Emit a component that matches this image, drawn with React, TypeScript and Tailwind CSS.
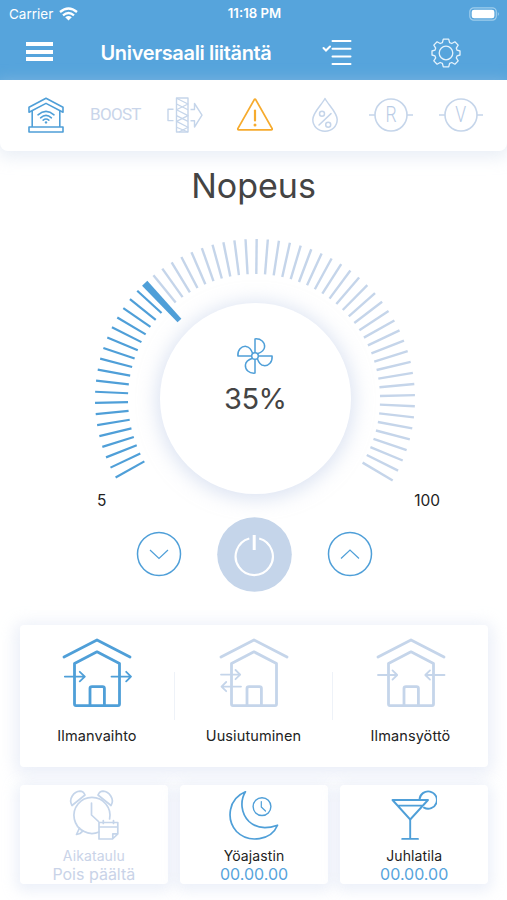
import type { ReactNode } from "react";

const BLUE = "#4f9fd8";
const PALE = "#c5d5ea";

const TICKS = 61;
const CURRENT = 19;

function polar(r: number, deg: number) {
  const a = (deg * Math.PI) / 180;
  return { x: 165 + r * Math.cos(a), y: 165 + r * Math.sin(a) };
}

function Dial() {
  return (
    <svg width="330" height="330" viewBox="0 0 330 330" className="[grid-area:1/1]">
      {Array.from({ length: TICKS }, (_, i) => {
        const deg = 150.6 + i * 4;
        const active = i < CURRENT;
        if (i === CURRENT) {
          const pts = [polar(160, deg - 1.5), polar(160, deg + 1.1), polar(109, deg + 0.9), polar(109, deg - 1.9)];
          return <polygon key={i} points={pts.map((p) => `${p.x},${p.y}`).join(" ")} fill={BLUE} />;
        }
        const a = polar(active ? 127 : 125, deg);
        const b = polar(160, deg);
        return (
          <line
            key={i}
            x1={a.x}
            y1={a.y}
            x2={b.x}
            y2={b.y}
            stroke={active ? BLUE : PALE}
            strokeWidth={active ? 2.2 : 2.4}
          />
        );
      })}
    </svg>
  );
}

function FanIcon() {
  return (
    <svg width="38" height="38" viewBox="0 0 38 38" fill="none" stroke={BLUE} strokeWidth="1.5" strokeLinejoin="round">
      <circle cx="19" cy="19" r="3.3" />
      <path d="M19 15.7V1.9C25 1.3 29 5.5 28.6 10C28.3 13.4 25 15.5 21.4 16.7" />
      <path d="M22.3 19H36.1C36.7 25 32.5 29 28 28.6C24.6 28.3 22.5 25 21.3 21.4" />
      <path d="M19 22.3V36.1C13 36.7 9 32.5 9.4 28C9.7 24.6 13 22.5 16.6 21.3" />
      <path d="M15.7 19H1.9C1.3 13 5.5 9 10 9.4C13.4 9.7 15.5 13 16.7 16.6" />
    </svg>
  );
}

function HomeWifiIcon() {
  return (
    <svg width="36" height="36" viewBox="0 0 36 36" fill="none" stroke={BLUE} strokeWidth="1.6" strokeLinejoin="round">
      <path d="M18 1.2L35 10.2V15.2L18 6.4L1 15.2V10.2Z" />
      <path d="M4.2 14V30M31.8 14V30" />
      <rect x="1" y="30" width="34" height="5" />
      <path d="M10 17.8Q18 10.8 26 17.8M12.6 20.8Q18 16 23.4 20.8M15.2 23.2Q18 20.8 20.8 23.2" strokeLinecap="round" />
      <circle cx="18" cy="25.4" r="1.2" fill={BLUE} stroke="none" />
    </svg>
  );
}

function FilterIcon() {
  return (
    <svg width="36" height="36" viewBox="0 0 36 36" fill="none" stroke={PALE} strokeWidth="1.4" strokeLinejoin="round">
      <rect x="9.5" y="1" width="11.5" height="34" />
      <path d="M9.5 1.2L21 7L9.5 12.8L21 18.6L9.5 24.4L21 30.2L12 35M9.5 7L21 12.8M9.5 18.6L21 24.4M9.5 30.2L21 35" strokeWidth="1.2" />
      <path d="M6.5 12.2H1V23.6H6.5" />
      <path d="M23.5 12.5H27.5V6.5L35 18.2L27.5 30V23.8H23.5" />
    </svg>
  );
}

function WarningIcon() {
  return (
    <svg width="38" height="36" viewBox="0 0 38 36" fill="none" stroke="#f6ab2e" strokeWidth="1.8" strokeLinejoin="round">
      <path d="M18.3 2.6Q19 1.5 19.7 2.6L36 31.4Q36.6 32.8 35.2 32.8H2.8Q1.4 32.8 2 31.4Z" />
      <path d="M19 13.5V23.5" strokeWidth="2.2" strokeLinecap="round" />
      <circle cx="19" cy="28" r="1.5" fill="#f6ab2e" stroke="none" />
    </svg>
  );
}

function HumidityIcon() {
  return (
    <svg width="28" height="36" viewBox="0 0 28 36" fill="none" stroke={PALE} strokeWidth="1.5" strokeLinejoin="round">
      <path d="M14 1.5C11 7.5 1.8 15.5 1.8 22.6C1.8 29.5 7.3 34.2 14 34.2S26.2 29.5 26.2 22.6C26.2 15.5 17 7.5 14 1.5Z" />
      <circle cx="11" cy="16.8" r="2.5" />
      <circle cx="17.2" cy="27.8" r="2.5" />
      <path d="M20 16.6L8 28" strokeLinecap="round" />
    </svg>
  );
}

function RelayIcon({ letter }: { letter: string }) {
  return (
    <div className="relative flex h-9 w-11.5 items-center justify-center">
      <svg width="46" height="36" viewBox="0 0 46 36" fill="none" stroke={PALE} strokeWidth="1.6" className="absolute inset-0">
        <circle cx="23" cy="18" r="16" />
        <path d="M1 18H7M39 18H45" />
      </svg>
      <span className="scale-x-80 font-[Roboto] text-[22px] leading-none font-light text-[#b9cce6]">{letter}</span>
    </div>
  );
}

type Flow = "through" | "recirculate" | "supply";

function HouseIcon({ flow, color }: { flow: Flow; color: string }) {
  return (
    <svg width="70" height="70" viewBox="0 0 70 70" fill="none" stroke={color} strokeWidth="2.8" strokeLinejoin="round" strokeLinecap="round">
      <path d="M2 19L35 2L68 19" />
      <path d="M35 13.8L12.5 25.4V66Q12.5 67.6 14 67.6H56Q57.5 67.6 57.5 66V25.4Z" />
      <path d="M28 67V50.5Q28 48.6 30 48.6H40.5Q42.4 48.6 42.4 50.5V67" />
      <g strokeWidth="1.8">
        {flow === "through" && <path d="M2.8 38.6H22.5M17.8 33.8L22.8 38.6L17.8 43.4M49.5 38.6H69M64.2 33.8L69 38.6L64.2 43.4" />}
        {flow === "recirculate" && <path d="M2 36.6H21M16.5 32L21.2 36.6L16.5 41.2M22 48.6H2.6M7.2 44L2.5 48.6L7.2 53.2" />}
        {flow === "supply" && <path d="M2 37H21M16.5 32.4L21.2 37L16.5 41.6M68.5 37H49.5M54 32.4L49.3 37L54 41.6" />}
      </g>
    </svg>
  );
}

function AlarmIcon() {
  return (
    <svg width="50" height="52" viewBox="0 0 50 52" fill="none" stroke={PALE} strokeWidth="1.7" strokeLinejoin="round" strokeLinecap="round">
      <path d="M30 42A18 18 0 1 1 40.6 29" />
      <path d="M22.5 13V25L29.5 31.5" />
      <path d="M3 15.5C-1 9 5 1.5 11 1.2C13.5 1.2 15 2.8 16 5Z" />
      <path d="M42 15.5C46 9 40 1.5 34 1.2C31.5 1.2 30 2.8 29 5Z" />
      <path d="M10.5 38L7.5 44.5L11 43.5L14 40.8" />
      <path d="M30 32.5H48.8V44L43.5 49H30ZM30 37H48.8M34.3 30.5V33.5M44.5 30.5V33.5M48.5 43.8H43.8V48.8" />
    </svg>
  );
}

function NightIcon() {
  return (
    <svg width="50" height="52" viewBox="0 0 50 52" fill="none" stroke={BLUE} strokeWidth="1.7" strokeLinejoin="round" strokeLinecap="round">
      <path d="M16.4 1.8C-1 9 -3 29.5 7.5 41.5C20 54 42.5 50 48.5 35.2C38 39 27.5 38.5 20 31.5C12 23.5 10.8 11 16.4 1.8Z" />
      <circle cx="33" cy="16.6" r="8.9" strokeWidth="1.4" />
      <path d="M32.3 11.5V17L36.5 21" strokeWidth="1.2" />
    </svg>
  );
}

function CocktailIcon() {
  return (
    <svg width="46" height="52" viewBox="0 0 46 52" fill="none" stroke={BLUE} strokeWidth="1.9" strokeLinejoin="round" strokeLinecap="round">
      <path d="M1.5 10H37L19.2 29.5ZM6.5 15.6H32" />
      <path d="M19.2 29.5V48.8M11.2 48.9H27" />
      <path d="M28.5 9.5A8.7 8.7 0 1 1 33 17.7" />
    </svg>
  );
}

function ModeTab({ label, children }: { label: string; children: ReactNode }) {
  return (
    <div className="flex flex-1 flex-col items-center pt-[13px]">
      {children}
      <span className="mt-[18px] text-[14.5px] leading-5 tracking-[0.1px] text-[#222]">{label}</span>
    </div>
  );
}

function TimerCard({ label, value, off, children }: { label: string; value: string; off?: boolean; children: ReactNode }) {
  return (
    <div className="flex h-[99px] flex-1 flex-col items-center rounded bg-white pt-[5px] shadow-[0_3px_14px_4px_rgba(205,216,238,0.38)]">
      {children}
      <span className={`mt-[4px] text-[14px] leading-[19px] tracking-[0.1px] ${off ? "text-[#c9d3e8]" : "text-[#1d1d1d]"}`}>{label}</span>
      <span className={`text-[16px] leading-[18px] ${off ? "text-[#c9d3e8]" : "text-[#56a4dc]"}`}>{value}</span>
    </div>
  );
}

function StatusBar() {
  return (
    <div className="grid h-7 grid-cols-3 items-center pr-[7px] pl-[9px] text-[13px] text-white">
      <div className="flex items-center gap-1.5">
        <span className="text-[13.5px]">Carrier</span>
        <svg width="19" height="14" viewBox="0 0 19 14" fill="none" stroke="white" strokeWidth="2.3">
          <path d="M1 5Q9.5 -2 18 5M4 8.3Q9.5 3.6 15 8.3" />
          <path d="M9.5 13.5L6.2 10.2Q9.5 7.6 12.8 10.2Z" fill="white" stroke="none" />
        </svg>
      </div>
      <span className="text-center text-[13.2px] font-semibold whitespace-nowrap">11:18 PM</span>
      <svg width="31" height="14" viewBox="0 0 31 14" className="justify-self-end">
        <rect x="0.8" y="0.8" width="26.5" height="12.4" rx="4" fill="none" stroke="#9fcdec" strokeWidth="1.2" />
        <rect x="2.7" y="2.7" width="22.7" height="8.6" rx="2.4" fill="white" />
        <path d="M28.8 5Q31 7 28.8 9Z" fill="#9fcdec" />
      </svg>
    </div>
  );
}

function NavBar() {
  return (
    <div className="flex h-[51.5px] items-center pb-[1px] pl-[26px]">
      <div className="mt-[-3px] flex w-[26.5px] flex-col gap-[3.5px]">
        <span className="h-1 bg-white" />
        <span className="h-1 bg-white" />
        <span className="h-1 bg-white" />
      </div>
      <h1 className="ml-12 w-[178px] text-[20px] font-semibold tracking-[-0.35px] whitespace-nowrap text-white">Universaali liitäntä</h1>
      <svg width="30" height="28" viewBox="0 0 30 28" fill="none" stroke="white" strokeWidth="2" strokeLinecap="round" className="ml-[43px]">
        <path d="M10.5 2H28.5M10.5 9.7H28.5M10.5 17.4H28.5M10.5 25H28.5M1.5 9L4 11.5L8 7.5" />
      </svg>
      <svg width="30" height="30" viewBox="0 0 30 30" fill="none" stroke="#e6f3fc" strokeWidth="1.3" strokeLinejoin="round" className="ml-[79px]">
        <circle cx="15" cy="15" r="6.8" />
        <path d="M12.3 1.2H17.7L18.6 4.6L20.8 5.5L23.9 3.8L27.2 7.1L25.3 10.1L26.1 12.2L29 13V17L26.1 17.8L25.3 19.9L27.2 22.9L23.9 26.2L20.8 24.5L18.6 25.4L17.7 28.8H12.3L11.4 25.4L9.2 24.5L6.1 26.2L2.8 22.9L4.7 19.9L3.9 17.8L1 17V13L3.9 12.2L4.7 10.1L2.8 7.1L6.1 3.8L9.2 5.5L11.4 4.6Z" />
      </svg>
    </div>
  );
}

export default function App() {
  return (
    <div className="flex h-[900px] w-[507px] flex-col overflow-hidden bg-white font-[Inter,sans-serif]">
      <header className="bg-[#56a4dc]">
        <StatusBar />
        <NavBar />
      </header>

      <div className="flex h-[71px] shrink-0 items-center rounded-b-lg bg-white pl-7 shadow-[0_4px_16px_3px_rgba(200,212,232,0.38)]">
        <HomeWifiIcon />
        <span className="ml-[26px] w-[50px] font-[Roboto] text-[17px] tracking-[-0.7px] text-[#c9d5ea]">BOOST</span>
        <div className="ml-[26.5px]">
          <FilterIcon />
        </div>
        <div className="ml-[33px]">
          <WarningIcon />
        </div>
        <div className="ml-[37px]">
          <HumidityIcon />
        </div>
        <div className="ml-[29.5px]">
          <RelayIcon letter="R" />
        </div>
        <div className="ml-[24px]">
          <RelayIcon letter="V" />
        </div>
      </div>

      <h2 className="mt-[13px] text-center text-[34px] leading-[44px] text-[#444]">Nopeus</h2>

      <div className="mt-[26px] ml-[90.3px] grid h-[330px] w-[330px] shrink-0 place-items-center">
        <Dial />
        <div className="flex h-[191px] w-[191px] flex-col items-center rounded-full bg-white pt-[34px] shadow-[0_2px_18px_4px_rgba(190,204,232,0.5)] [grid-area:1/1]">
          <FanIcon />
          <span className="mt-[6px] text-[29px] leading-9 tracking-[-0.5px] text-[#444]">35%</span>
        </div>
      </div>

      <div className="-mt-[73px] flex shrink-0 justify-between pr-[67px] pl-[97px] text-[15.5px] leading-5 text-[#222]">
        <span>5</span>
        <span>100</span>
      </div>

      <div className="mt-1.5 flex shrink-0 items-center justify-center gap-[35px] pl-[2px]">
        <svg width="46" height="46" viewBox="0 0 46 46" fill="none" stroke={BLUE} strokeWidth="1.5">
          <circle cx="23" cy="23" r="21.5" />
          <path d="M14 19L23 27.5L32 19" strokeWidth="1.2" />
        </svg>
        <svg width="75" height="75" viewBox="0 0 75 75" fill="none" stroke="white" strokeWidth="2.2">
          <circle cx="37.5" cy="37.5" r="37.3" fill={PALE} stroke="none" />
          <path d="M32.3 21.5A18.6 18.6 0 1 0 42.2 21.5" />
          <path d="M37.2 18V33" strokeWidth="3" />
        </svg>
        <svg width="46" height="46" viewBox="0 0 46 46" fill="none" stroke={BLUE} strokeWidth="1.5">
          <circle cx="23" cy="23" r="21.5" />
          <path d="M14 27.5L23 19L32 27.5" strokeWidth="1.2" />
        </svg>
      </div>

      <div className="mx-5 mt-[33px] flex h-[142px] w-[468px] shrink-0 items-center rounded bg-white shadow-[0_3px_16px_5px_rgba(205,216,238,0.4)]">
        <div className="flex h-full w-[154px]">
          <ModeTab label="Ilmanvaihto">
            <HouseIcon flow="through" color={BLUE} />
          </ModeTab>
        </div>
        <div className="h-12 w-px bg-[#eef2f8]" />
        <div className="flex h-full w-[157px]">
          <ModeTab label="Uusiutuminen">
            <HouseIcon flow="recirculate" color={PALE} />
          </ModeTab>
        </div>
        <div className="h-12 w-px bg-[#eef2f8]" />
        <div className="flex h-full flex-1">
          <ModeTab label="Ilmansyöttö">
            <HouseIcon flow="supply" color={PALE} />
          </ModeTab>
        </div>
      </div>

      <div className="mx-5 mt-[18px] flex w-[468px] shrink-0 gap-[12.5px]">
        <TimerCard label="Aikataulu" value="Pois päältä" off>
          <AlarmIcon />
        </TimerCard>
        <TimerCard label="Yöajastin" value="00.00.00">
          <NightIcon />
        </TimerCard>
        <TimerCard label="Juhlatila" value="00.00.00">
          <CocktailIcon />
        </TimerCard>
      </div>
    </div>
  );
}
